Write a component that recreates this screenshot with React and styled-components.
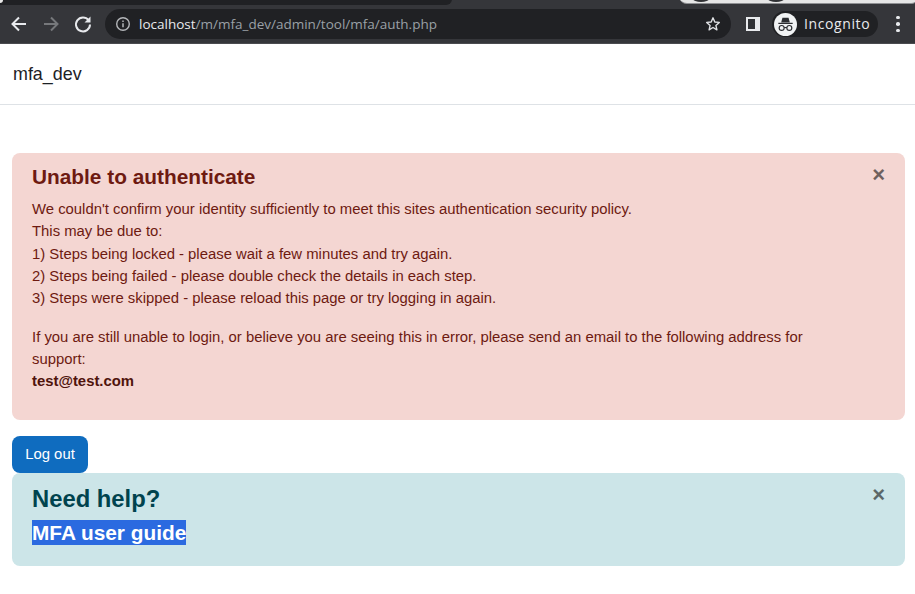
import React from 'react';
import styled, { createGlobalStyle } from 'styled-components';

const GlobalStyle = createGlobalStyle`
  html, body {
    margin: 0;
    padding: 0;
    background: #fff;
    overflow: hidden;
  }
  body {
    font-family: "Liberation Sans", Arial, sans-serif;
    font-size: 14.86px;
    line-height: 22.32px;
    color: #1d2125;
  }
`;

const App = () => (
  <Page>
    <GlobalStyle />
    <TabStrip>
      <TabLeft />
      <TabActive>
        <TabDot />
        <TabDot />
      </TabActive>
    </TabStrip>
    <Toolbar>
      <NavIcon viewBox="0 0 20 20">
        <path d="M17 10H4M10 3.500 3.500 10l6.500 6.500" fill="none" stroke="#e8eaed" strokeWidth="2" />
      </NavIcon>
      <NavIcon viewBox="0 0 20 20">
        <path d="M3 10h13M10 3.500l6.500 6.500-6.500 6.500" fill="none" stroke="#76787b" strokeWidth="2" />
      </NavIcon>
      <NavIcon viewBox="0 0 20 20">
        <path d="M15.600 6.200A7 7 0 1 0 17 10.500" fill="none" stroke="#e8eaed" strokeWidth="2" />
        <path d="M17.500 2.500v6h-6z" fill="#e8eaed" />
      </NavIcon>
      <Omnibox>
        <InfoIcon viewBox="0 0 16 16">
          <circle cx="8" cy="8" r="6.300" fill="none" stroke="#b4b6b9" strokeWidth="1.400" />
          <path d="M8 7.200v4M8 4.600v1.400" stroke="#b4b6b9" strokeWidth="1.500" />
        </InfoIcon>
        <Url>
          <UrlHost>localhost</UrlHost>/m/mfa_dev/admin/tool/mfa/auth.php
        </Url>
        <StarIcon viewBox="0 0 16 16">
          <path
            d="M8 1.800l1.800 4.200 4.500.4-3.400 3 1 4.400L8 11.500l-3.900 2.300 1-4.400-3.400-3 4.500-.4z"
            fill="none"
            stroke="#e0e2e5"
            strokeWidth="1.400"
            strokeLinejoin="round"
          />
        </StarIcon>
      </Omnibox>
      <SidePanelIcon viewBox="0 0 14 14">
        <path d="M0 0h14v14H0z" fill="#e8eaed" />
        <path d="M2 2h7v10H2z" fill="#2f3135" />
      </SidePanelIcon>
      <IncognitoChip>
        <IncognitoBadge viewBox="0 0 24 24">
          <circle cx="12" cy="12" r="12" fill="#f1f3f4" />
          <path d="M8.800 5h6.400l1.300 4.800h-9z" fill="#2b2d31" />
          <path d="M4.500 10.200h15v1.300h-15z" fill="#2b2d31" />
          <circle cx="8" cy="15.600" r="2.600" fill="none" stroke="#2b2d31" strokeWidth="1.200" />
          <circle cx="16" cy="15.600" r="2.600" fill="none" stroke="#2b2d31" strokeWidth="1.200" />
          <path d="M10.600 15.200h2.800" stroke="#2b2d31" strokeWidth="1.200" />
        </IncognitoBadge>
        <IncognitoLabel>Incognito</IncognitoLabel>
      </IncognitoChip>
      <MenuDots>
        <MenuDot />
        <MenuDot />
        <MenuDot />
      </MenuDots>
    </Toolbar>

    <SiteHeader>mfa_dev</SiteHeader>

    <Content>
      <Alert $tone="danger">
        <CloseButton>×</CloseButton>
        <AlertTitle>Unable to authenticate</AlertTitle>
        <AlertText>
          We couldn't confirm your identity sufficiently to meet this sites authentication security policy.
          <br />
          This may be due to:
          <br />
          1) Steps being locked - please wait a few minutes and try again.
          <br />
          2) Steps being failed - please double check the details in each step.
          <br />
          3) Steps were skipped - please reload this page or try logging in again.
        </AlertText>
        <AlertText>
          If you are still unable to login, or believe you are seeing this in error, please send an email to the
          following address for support:
          <br />
          <Email>test@test.com</Email>
        </AlertText>
      </Alert>
      <LogoutButton>Log out</LogoutButton>
      <Alert $tone="info">
        <CloseButton>×</CloseButton>
        <HelpTitle>Need help?</HelpTitle>
        <GuideTitle>
          <Selected>MFA user guide</Selected>
        </GuideTitle>
      </Alert>
    </Content>
  </Page>
);

export default App;

const Page = styled.div`
  width: 915px;
  height: 594px;
  overflow: hidden;
  background: #fff;
`;
const TabStrip = styled.div`
  height: 5px;
  background: #35363a;
  position: relative;
  overflow: hidden;
  &::before {
    content: "";
    position: absolute;
    z-index: 1;
    left: 0;
    top: 0;
    width: 3px;
    height: 3px;
    background: #e8e8e8;
    border-bottom-right-radius: 3px;
  }
`;
const TabLeft = styled.div`
  position: absolute;
  left: 0;
  top: -24px;
  width: 452px;
  height: 29px;
  background: #202124;
  border-radius: 0 0 6px 0;
`;
const TabActive = styled.div`
  position: absolute;
  left: 679px;
  top: -20px;
  width: 240px;
  height: 24px;
  background: #e6e6e6;
  border-radius: 8px;
  border-bottom: 1px solid #8f9093;
  display: flex;
  gap: 59px;
  padding-left: 14px;
  box-sizing: border-box;
  align-items: flex-end;
`;
const TabDot = styled.div`
  width: 16px;
  height: 6px;
  margin-bottom: 1px;
  border-radius: 50%;
  background: #303134;
`;
const Toolbar = styled.div`
  height: 38px;
  background: #35363a;
  border-bottom: 1px solid #4a4b4f;
  display: flex;
  align-items: center;
  padding-left: 9px;
`;
const NavIcon = styled.svg`
  width: 20px;
  height: 20px;
  margin-right: 12px;
  flex: none;
`;
const Omnibox = styled.div`
  width: 626px;
  height: 30px;
  border-radius: 15px;
  background: #202124;
  display: flex;
  align-items: center;
  padding: 0 10px;
  box-sizing: border-box;
  flex: none;
`;
const InfoIcon = styled.svg`
  width: 16px;
  height: 16px;
  flex: none;
`;
const Url = styled.div`
  margin-left: 8px;
  flex: 1;
  font-family: "Open Sans", "Noto Sans", sans-serif;
  font-size: 13.5px;
  color: #9aa0a6;
  white-space: nowrap;
`;
const UrlHost = styled.span`
  color: #e8eaed;
`;
const StarIcon = styled.svg`
  width: 16px;
  height: 16px;
  flex: none;
`;
const SidePanelIcon = styled.svg`
  width: 14px;
  height: 14px;
  margin-left: 15px;
  flex: none;
`;
const IncognitoChip = styled.div`
  height: 26px;
  margin-left: 12px;
  padding-left: 2px;
  width: 106px;
  box-sizing: border-box;
  border-radius: 13px;
  background: #202124;
  display: flex;
  align-items: center;
  flex: none;
`;
const IncognitoBadge = styled.svg`
  width: 23px;
  height: 23px;
  flex: none;
`;
const IncognitoLabel = styled.span`
  margin-left: 7px;
  font-family: "Open Sans", "Noto Sans", sans-serif;
  font-size: 14px;
  letter-spacing: 0.6px;
  color: #e8eaed;
`;
const MenuDots = styled.div`
  margin-left: 18px;
  display: flex;
  flex-direction: column;
  gap: 3px;
`;
const MenuDot = styled.div`
  width: 3.5px;
  height: 3.5px;
  background: #e8eaed;
  border-radius: 50%;
`;
const SiteHeader = styled.div`
  height: 60px;
  border-bottom: 1px solid #dee2e6;
  padding-left: 13px;
  display: flex;
  align-items: center;
  font-size: 17.9px;
  color: #1d2125;
`;
const Content = styled.div`
  padding: 48px 10px 0 12px;
`;
const Alert = styled.div`
  position: relative;
  border-radius: 8px;
  padding: 11px 60px 11px 20px;
  background: ${(p) => (p.$tone === 'danger' ? '#f4d6d2' : '#cce5e8')};
  color: ${(p) => (p.$tone === 'danger' ? '#6e1a11' : '#00434e')};
`;
const CloseButton = styled.span`
  position: absolute;
  top: 10px;
  right: 20px;
  font-size: 22px;
  line-height: 24px;
  font-weight: 700;
  color: #000;
  opacity: 0.55;
`;
const AlertTitle = styled.h4`
  margin: 0 0 9px;
  font-size: 20.83px;
  line-height: 25px;
  font-weight: 700;
`;
const AlertText = styled.p`
  margin: 0 0 16px;
`;
const Email = styled.strong`
  color: #4f130c;
`;
const LogoutButton = styled.button`
  display: block;
  height: 37px;
  width: 76px;
  margin-top: 16px;
  border: 0;
  border-radius: 8px;
  background: #0f6cbf;
  color: #fff;
  font: 14.86px "Liberation Sans", Arial, sans-serif;
`;
const HelpTitle = styled.h3`
  margin: 0 0 7px;
  font-size: 23.8px;
  line-height: 29px;
  font-weight: 700;
`;
const GuideTitle = styled.h4`
  margin: 0 0 10px;
  font-size: 20.83px;
  line-height: 25px;
  font-weight: 700;
`;
const Selected = styled.span`
  display: inline-block;
  background: #2b6ae0;
  color: #fff;
`;
